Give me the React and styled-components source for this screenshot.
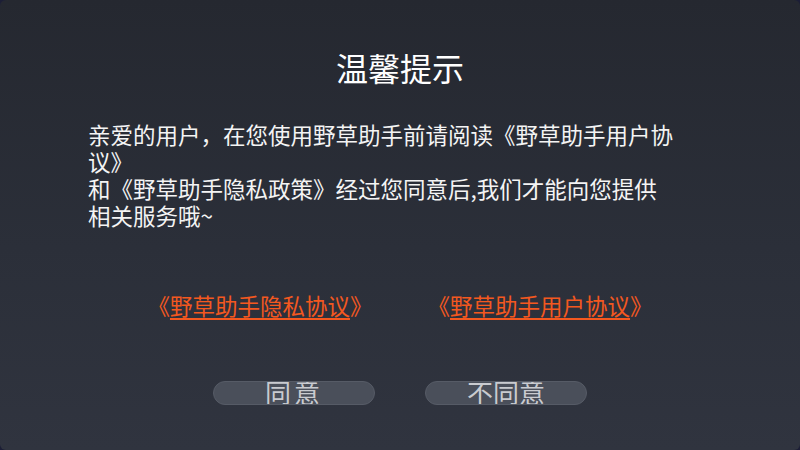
import React from 'react'
import styled, { createGlobalStyle } from 'styled-components'

const GlobalStyle = createGlobalStyle`
  html, body {
    margin: 0;
    padding: 0;
    width: 800px;
    height: 450px;
    overflow: hidden;
    background: #1c1e36;
  }
  body {
    font-family: "Noto Sans CJK SC", "Noto Sans", sans-serif;
  }
`;

function App() {
  return (
    <>
      <GlobalStyle />
      <Dialog>
        <Title>温馨提示</Title>
        <Body>
          亲爱的用户，在您使用野草助手前请阅读《野草助手用户协议》
          <br />
          和《野草助手隐私政策》经过您同意后,我们才能向您提供相关服务哦~
        </Body>

        <Links>
          <Link>
            《<u>野草助手隐私协议</u>》
          </Link>
          <Link>
            《<u>野草助手用户协议</u>》
          </Link>
        </Links>

        <Buttons>
          <Button spacing="3px">同意</Button>
          <Button>不同意</Button>
        </Buttons>
      </Dialog>
    </>
  )
}

const Dialog = styled.div`
  width: 800px;
  height: 450px;
  box-sizing: border-box;
  border-radius: 6px;
  background: linear-gradient(180deg, #252830 0%, #2b2f39 55%, #30343f 100%);
  display: flex;
  flex-direction: column;
  align-items: center;
  padding-top: 47px;
`;

const Title = styled.div`
  font-size: 32px;
  line-height: 40px;
  color: #ffffff;
`;

const Body = styled.div`
  align-self: flex-start;
  margin-left: 88px;
  margin-top: 34px;
  width: 588px;
  font-size: 22.5px;
  line-height: 27px;
  color: #f4f4f4;
`;

const Links = styled.div`
  display: flex;
  justify-content: center;
  gap: 55px;
  margin-top: 61px;
`;

const Link = styled.div`
  font-size: 22.5px;
  line-height: 30px;
  color: #f4581f;
  cursor: pointer;

  u {
    text-decoration: underline;
    text-underline-offset: 3px;
    text-decoration-thickness: 2px;
  }
`;

const Buttons = styled.div`
  display: flex;
  justify-content: center;
  gap: 50px;
  margin-top: 61px;
`;

const Button = styled.div`
  width: 162px;
  height: 24px;
  box-sizing: border-box;
  border-radius: 12px;
  border: 1px solid #565b66;
  background: #4a4f5a;
  color: #c9cbd0;
  font-size: 26px;
  line-height: 20px;
  letter-spacing: ${props => props.spacing || '0'};
  text-align: center;
  overflow: hidden;
  cursor: pointer;
`;

export default App
